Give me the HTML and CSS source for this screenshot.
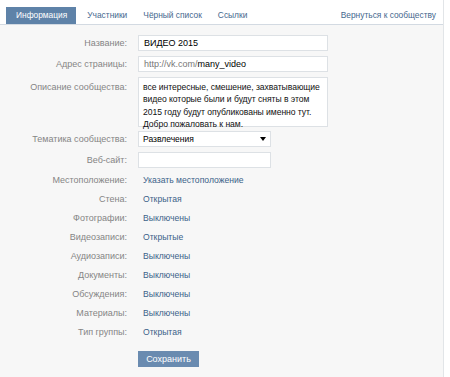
FILE: index.html
```html
<!doctype html>
<html>
  <head>
    <meta charset="utf-8">
    <link rel="stylesheet" href="styles.css">
    <title>Управление сообществом</title>
  </head>
  <body>
    <div id="page-wrapper">
      <div id="tabs">
        <a class="tab active">Информация</a>
        <a class="tab">Участники</a>
        <a class="tab">Чёрный список</a>
        <a class="tab">Ссылки</a>
        <a class="tab back">Вернуться к сообществу</a>
      </div>
      <div id="settings">
        <div class="row field">
          <span class="label">Название:</span>
          <div class="input wide">ВИДЕО 2015</div>
        </div>
        <div class="row field">
          <span class="label">Адрес страницы:</span>
          <div class="input wide"><span class="grey">http://vk.com/</span>many_video</div>
        </div>
        <div class="row field top">
          <span class="label">Описание сообщества:</span>
          <div class="input wide textarea">все интересные, смешение, захватывающие<br>видео которые были и будут сняты в этом<br>2015 году будут опубликованы именно тут.<br>Добро пожаловать к нам.</div>
        </div>
        <div class="row field">
          <span class="label">Тематика сообщества:</span>
          <div class="input narrow select">Развлечения<span class="arrow"></span></div>
        </div>
        <div class="row field">
          <span class="label">Веб-сайт:</span>
          <div class="input narrow"></div>
        </div>
        <div class="row first-text">
          <span class="label">Местоположение:</span>
          <a class="value">Указать местоположение</a>
        </div>
        <div class="row"><span class="label">Стена:</span><a class="value">Открытая</a></div>
        <div class="row"><span class="label">Фотографии:</span><a class="value">Выключены</a></div>
        <div class="row"><span class="label">Видеозаписи:</span><a class="value">Открытые</a></div>
        <div class="row"><span class="label">Аудиозаписи:</span><a class="value">Выключены</a></div>
        <div class="row"><span class="label">Документы:</span><a class="value">Выключены</a></div>
        <div class="row"><span class="label">Обсуждения:</span><a class="value">Выключены</a></div>
        <div class="row"><span class="label">Материалы:</span><a class="value">Выключены</a></div>
        <div class="row"><span class="label">Тип группы:</span><a class="value">Открытая</a></div>
        <div class="row buttons">
          <span class="label"></span>
          <button id="save-btn">Сохранить</button>
        </div>
      </div>
    </div>
  </body>
</html>
```

FILE: styles.css
```css
html {
  background: #ffffff;
}

body {
  margin: 0;
  font-family: "Liberation Sans", Arial, sans-serif;
  font-size: 9px;
  color: #000;
}

#page-wrapper {
  width: 443px;
  height: 377px;
  background: #f7f7f7;
  border-right: 1px solid #e2e5e8;
}

#tabs {
  display: flex;
  box-sizing: border-box;
  height: 25px;
  padding: 0 0 0 6px;
  background: #ffffff;
  border-bottom: 1px solid #d3dae2;
  align-items: flex-end;
}

.tab {
  display: block;
  height: 17px;
  line-height: 17px;
  padding: 0 8px;
  font-size: 8.4px;
  color: #45688e;
}

.tab.active {
  padding: 0 9px 0 10px;
  margin-right: 3px;
  background: #5e82a8;
  color: #ffffff;
}

.tab.back {
  margin-left: auto;
  padding-right: 7px;
}

#settings {
  padding-top: 10px;
}

.row {
  display: flex;
  align-items: center;
  height: 19px;
}

.label {
  display: inline-block;
  width: 127px;
  margin-right: 11px;
  text-align: right;
  color: #858585;
  flex-shrink: 0;
}

.value {
  margin-left: 5px;
  font-size: 8.6px;
  color: #3b6289;
}

.row.field {
  height: 16px;
  margin-bottom: 5px;
}

.row.top {
  height: auto;
  align-items: flex-start;
  margin-bottom: 4px;
}

.row.top .label {
  padding-top: 5px;
}

.input {
  box-sizing: border-box;
  height: 16px;
  line-height: 14px;
  padding: 0 5px;
  background: #ffffff;
  border: 1px solid #dde1e5;
  color: #000;
  white-space: nowrap;
}

.wide {
  width: 190px;
}

.narrow {
  width: 133px;
}

.grey {
  color: #777777;
}

.textarea {
  height: 50px;
  line-height: 12.3px;
  padding: 3px 4px;
  font-size: 8.6px;
  letter-spacing: -0.05px;
  color: #111;
}

.select {
  position: relative;
  padding-left: 4px;
  font-size: 8.5px;
}

.arrow {
  position: absolute;
  right: 4px;
  top: 5px;
  border-left: 3px solid transparent;
  border-right: 3px solid transparent;
  border-top: 4px solid #000;
}

.row.first-text {
  margin-top: -3px;
}

.row.buttons {
  height: 16px;
  margin-top: 10px;
}

#save-btn {
  width: 61px;
  height: 16px;
  padding: 0;
  border: 0;
  background: #6a8bb0;
  color: #ffffff;
  font-family: "Liberation Sans", Arial, sans-serif;
  font-size: 9px;
}
```
